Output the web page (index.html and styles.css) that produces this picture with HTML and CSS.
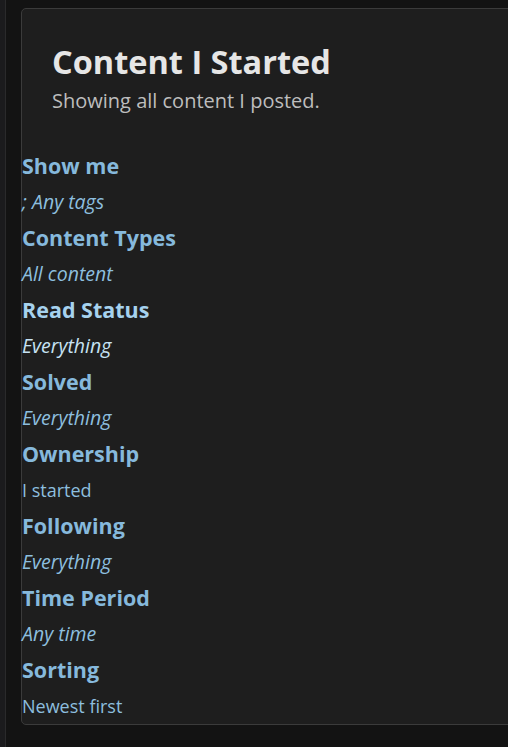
FILE: index.html
```html
<!DOCTYPE html>
<html>
<head>
<meta charset="utf-8">
<link rel="stylesheet" href="styles.css">
</head>
<body>
<div class="shell">
  <div class="rail"></div>
  <main class="main">
    <section class="card">
      <header class="card-head">
        <h1 class="title">Content I Started</h1>
        <p class="subtitle">Showing all content I posted.</p>
      </header>
      <dl class="filters">
        <dt class="f-label">Show me</dt>
        <dd class="f-value italic">; Any tags</dd>
        <dt class="f-label">Content Types</dt>
        <dd class="f-value italic">All content</dd>
        <dt class="f-label hl">Read Status</dt>
        <dd class="f-value italic hl-val">Everything</dd>
        <dt class="f-label">Solved</dt>
        <dd class="f-value italic">Everything</dd>
        <dt class="f-label">Ownership</dt>
        <dd class="f-value">I started</dd>
        <dt class="f-label">Following</dt>
        <dd class="f-value italic">Everything</dd>
        <dt class="f-label">Time Period</dt>
        <dd class="f-value italic">Any time</dd>
        <dt class="f-label">Sorting</dt>
        <dd class="f-value">Newest first</dd>
      </dl>
    </section>
  </main>
</div>
</body>
</html>
```
FILE: styles.css
```css
html, body {
  margin: 0;
  padding: 0;
  background: #131313;
  height: 100%;
  overflow: hidden;
  font-family: "Open Sans", "Noto Sans", sans-serif;
}
.shell {
  display: flex;
  height: 100%;
}
.rail {
  width: 5px;
  flex: none;
  background: #1b1b1d;
  border-right: 1px solid #2a2a2b;
}
.main {
  flex: 1;
  padding: 8px 0 0 15px;
  min-width: 0;
  overflow: hidden;
}
.card {
  width: 620px;
  background: #1e1e1e;
  border: 1px solid #3b3b3b;
  border-radius: 5px;
  box-sizing: border-box;
}
.card-head {
  padding: 30px 30px 34px 30px;
}
.title {
  margin: 0;
  font-size: 32.5px;
  line-height: 46px;
  font-weight: 700;
  color: #e6e6e6;
}
.subtitle {
  margin: 3px 0 0 0;
  font-size: 20px;
  line-height: 26px;
  color: #bdbdbd;
}
.filters {
  margin: 0;
  padding: 0;
}
.f-label {
  margin: 0;
  font-size: 21.5px;
  line-height: 36px;
  font-weight: 700;
  color: #86b9dc;
}
.f-value {
  margin: 0;
  font-size: 18px;
  line-height: 36px;
  color: #8dbedf;
}
.italic {
  font-style: italic;
  font-size: 19.5px;
}
.hl {
  color: #a6d2ee;
}
.hl-val {
  color: #c6e2f3;
}
```
